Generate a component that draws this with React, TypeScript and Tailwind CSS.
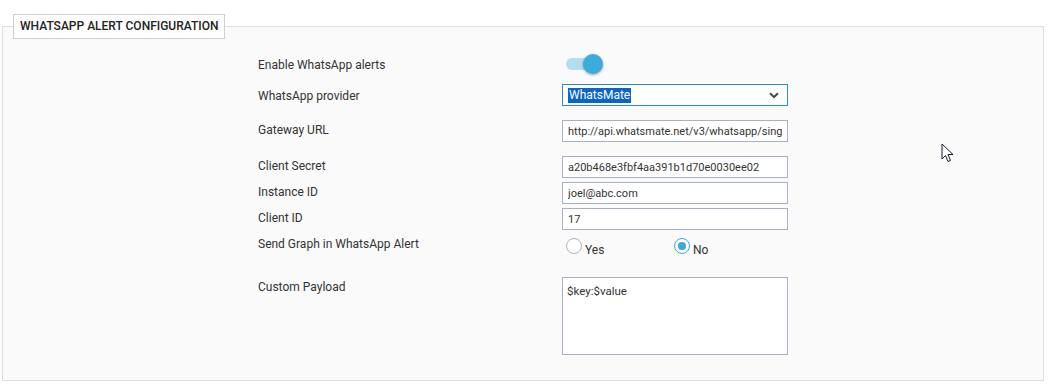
import { useState } from 'react';

const inputCls =
    'h-[22px] w-[226px] border border-[#a9b0c0] bg-white px-[5px] text-[11px] leading-[20px] text-[#333] outline-none';

function Toggle({ on }: { on: boolean }) {
    return (
        <div className="relative ml-[4px] h-[20px] w-[38px]">
            <div className="absolute left-0 top-[4px] h-[12px] w-[32px] rounded-full bg-[#b3def2]" />
            <div
                className={`absolute top-0 h-[20px] w-[20px] rounded-full shadow-[0_1px_3px_rgba(0,0,0,0.35)] ${
                    on ? 'left-[17px] bg-[#3aabdb]' : 'left-0 bg-[#f1f1f1]'
                }`}
            />
        </div>
    );
}

function Radio({ checked, label }: { checked: boolean; label: string }) {
    return (
        <div className="flex items-start">
            <div
                className={`mt-[4px] flex h-[16px] w-[16px] items-center justify-center rounded-full border bg-white ${
                    checked ? 'border-[#3aa9d9]' : 'border-[#b0b4bc]'
                }`}
            >
                {checked && <div className="h-[8px] w-[8px] rounded-full bg-[#3aa9d9]" />}
            </div>
            <span className="ml-[3px] mt-[7px] leading-[18px]">{label}</span>
        </div>
    );
}

function Cursor() {
    return (
        <svg
            className="absolute left-[941px] top-[143px]"
            width="14"
            height="21"
            viewBox="0 0 14 21"
        >
            <path
                d="M1 1 L1 16 L4.5 12.5 L7 18.5 L9.5 17.5 L7 11.5 L12 11.5 Z"
                fill="#fff"
                stroke="#1a1a2a"
                strokeWidth="1"
                strokeLinejoin="round"
            />
        </svg>
    );
}

export default function App() {
    const [sendGraph, setSendGraph] = useState(false);

    return (
        <div className="relative h-[385px] w-[1052px] overflow-hidden bg-white font-['Roboto',sans-serif] text-[12px] text-[#333]">
            <fieldset className="ml-[2px] mt-[14px] h-[367px] w-[1042px] border border-[#dedede] bg-[#fafafa] pl-[10px]">
                <legend className="h-[25px] border border-[#cfcfcf] bg-white px-[6px] text-[12px] font-medium leading-[23px] text-[#222]">
                    WHATSAPP ALERT CONFIGURATION
                </legend>

                <div className="ml-[245px] mt-[15px] flex flex-col">
                    {/* Enable */}
                    <div className="flex h-[20px] items-center">
                        <div className="w-[304px] pt-[1px]">Enable WhatsApp alerts</div>
                        <Toggle on />
                    </div>

                    {/* Provider */}
                    <div className="mt-[10px] flex items-center">
                        <div className="w-[304px] pt-[2px]">WhatsApp provider</div>
                        <div className="flex h-[22px] w-[226px] items-center justify-between border border-[#2a8dd4] bg-white pl-[5px] pr-[8px]">
                            <span className="bg-[#0a64c9] px-[1px] leading-[15px] text-white">
                                WhatsMate
                            </span>
                            <svg width="10" height="7" viewBox="0 0 10 7">
                                <path
                                    d="M1 1.2 L5 5 L9 1.2"
                                    fill="none"
                                    stroke="#4a4a4a"
                                    strokeWidth="2"
                                />
                            </svg>
                        </div>
                    </div>

                    {/* Gateway */}
                    <div className="mt-[14px] flex items-start">
                        <div className="w-[304px] pt-[1px] leading-[18px]">Gateway URL</div>
                        <input
                            className={inputCls}
                            readOnly
                            value="http://api.whatsmate.net/v3/whatsapp/single/text/message/"
                        />
                    </div>

                    {/* Client secret */}
                    <div className="mt-[14px] flex items-start">
                        <div className="w-[304px] pt-[1px] leading-[18px]">Client Secret</div>
                        <input className={inputCls} readOnly value="a20b468e3fbf4aa391b1d70e0030ee02" />
                    </div>

                    <div className="mt-[4px] flex items-start">
                        <div className="w-[304px] pt-[1px] leading-[18px]">Instance ID</div>
                        <input className={inputCls} readOnly value="joel@abc.com" />
                    </div>

                    <div className="mt-[4px] flex items-start">
                        <div className="w-[304px] pt-[1px] leading-[18px]">Client ID</div>
                        <input className={inputCls} readOnly value="17" />
                    </div>

                    {/* Send graph */}
                    <div className="mt-[4px] flex items-start">
                        <div className="w-[304px] pt-[1px] leading-[18px]">Send Graph in WhatsApp Alert</div>
                        <div className="ml-[4px] flex">
                            <div className="w-[108px]" onClick={() => setSendGraph(true)}>
                                <Radio checked={sendGraph} label="Yes" />
                            </div>
                            <div onClick={() => setSendGraph(false)}>
                                <Radio checked={!sendGraph} label="No" />
                            </div>
                        </div>
                    </div>

                    {/* Payload */}
                    <div className="mt-[18px] flex items-start">
                        <div className="w-[304px] pt-[1px] leading-[18px]">Custom Payload</div>
                        <textarea
                            className="h-[78px] w-[226px] resize-none border border-[#a9b0c0] bg-white px-[4px] pt-[4px] text-[11.5px] leading-[18px] text-[#333] outline-none"
                            readOnly
                            value="$key:$value"
                        />
                    </div>
                </div>
            </fieldset>
            <Cursor />
        </div>
    );
}
